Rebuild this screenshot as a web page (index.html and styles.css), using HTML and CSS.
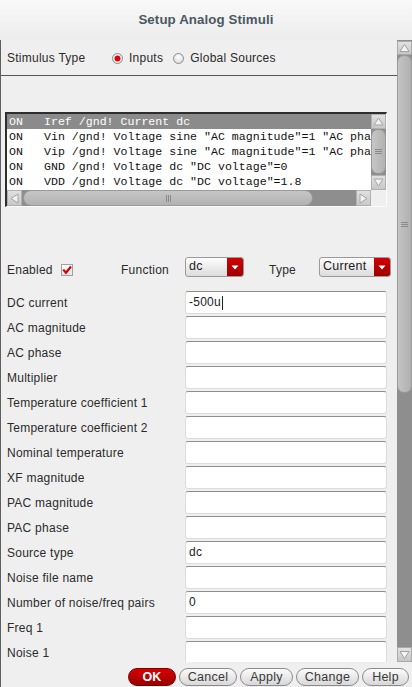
FILE: index.html
```html
<!DOCTYPE html>
<html>
<head>
<meta charset="utf-8">
<title>Setup Analog Stimuli</title>
<link rel="stylesheet" href="styles.css">
</head>
<body>
<div class="window">
  <div class="titlebar">Setup Analog Stimuli</div>
  <div class="middle">
    <div class="content">
      <div class="stim-row">
        <span class="stim-label">Stimulus Type</span>
        <span class="radio on"></span><span class="radio-text first">Inputs</span>
        <span class="radio"></span><span class="radio-text">Global Sources</span>
      </div>

      <div class="listbox">
        <div class="rows">
          <div class="row sel"><span class="c1">ON</span><span>Iref /gnd! Current dc</span></div>
          <div class="row"><span class="c1">ON</span><span>Vin /gnd! Voltage sine "AC magnitude"=1 "AC phase"=0</span></div>
          <div class="row"><span class="c1">ON</span><span>Vip /gnd! Voltage sine "AC magnitude"=1 "AC phase"=180</span></div>
          <div class="row"><span class="c1">ON</span><span>GND /gnd! Voltage dc "DC voltage"=0</span></div>
          <div class="row"><span class="c1">ON</span><span>VDD /gnd! Voltage dc "DC voltage"=1.8</span></div>
        </div>
        <div class="lvscroll">
          <div class="arrow v"><svg width="13" height="13" viewBox="0 0 13 13"><path d="M2 10 L6.5 3 L11 10 Z" fill="#f2f2f2" stroke="#a4a4a4"/></svg></div>
          <div class="lthumb-v"><svg width="7" height="7" viewBox="0 0 7 7"><path d="M0 1.5h7M0 3.5h7M0 5.5h7" stroke="#8a8a8a" stroke-width="1"/></svg></div>
          <div class="arrow v"><svg width="13" height="13" viewBox="0 0 13 13"><path d="M2 3 L6.5 10 L11 3 Z" fill="#f2f2f2" stroke="#a4a4a4"/></svg></div>
        </div>
        <div class="lhscroll">
          <div class="arrow h"><svg width="13" height="13" viewBox="0 0 13 13"><path d="M10 2 L3 6.5 L10 11 Z" fill="#f2f2f2" stroke="#a4a4a4"/></svg></div>
          <div class="lthumb-h"><svg width="7" height="7" viewBox="0 0 7 7"><path d="M1.5 0v7M3.5 0v7M5.5 0v7" stroke="#8a8a8a" stroke-width="1"/></svg></div>
          <div class="htrack"></div>
          <div class="arrow h"><svg width="13" height="13" viewBox="0 0 13 13"><path d="M3 2 L10 6.5 L3 11 Z" fill="#f2f2f2" stroke="#a4a4a4"/></svg></div>
        </div>
        <div class="corner"></div>
      </div>

      <div class="opts">
        <span class="opt-enabled">Enabled</span>
        <span class="checkbox"><svg width="10" height="10" viewBox="0 0 10 10"><path d="M1.2 4.6 L4 7.8 L9 1.5" stroke="#d40000" stroke-width="2.2" fill="none"/></svg></span>
        <span class="opt-function">Function</span>
        <span class="dd dd-func"><span class="dd-text">dc</span><span class="dd-btn"><svg width="8" height="5" viewBox="0 0 8 5"><path d="M0.5 0.5 L7.5 0.5 L4 4.5 Z" fill="#fff"/></svg></span></span>
        <span class="opt-type">Type</span>
        <span class="dd dd-type"><span class="dd-text">Current</span><span class="dd-btn"><svg width="8" height="5" viewBox="0 0 8 5"><path d="M0.5 0.5 L7.5 0.5 L4 4.5 Z" fill="#fff"/></svg></span></span>
      </div>

      <div class="fields">
        <span class="label">DC current</span><span class="field">-500u<span class="caret"></span></span>
        <span class="label">AC magnitude</span><span class="field"></span>
        <span class="label">AC phase</span><span class="field"></span>
        <span class="label">Multiplier</span><span class="field"></span>
        <span class="label">Temperature coefficient 1</span><span class="field"></span>
        <span class="label">Temperature coefficient 2</span><span class="field"></span>
        <span class="label">Nominal temperature</span><span class="field"></span>
        <span class="label">XF magnitude</span><span class="field"></span>
        <span class="label">PAC magnitude</span><span class="field"></span>
        <span class="label">PAC phase</span><span class="field"></span>
        <span class="label">Source type</span><span class="field">dc</span>
        <span class="label">Noise file name</span><span class="field"></span>
        <span class="label">Number of noise/freq pairs</span><span class="field">0</span>
        <span class="label">Freq 1</span><span class="field"></span>
        <span class="label">Noise 1</span><span class="field"></span>
      </div>
    </div>

    <div class="vscroll">
      <div class="sb-btn"><svg width="13" height="12" viewBox="0 0 13 12"><path d="M2 9.5 L6.5 2.5 L11 9.5 Z" fill="#f4f4f4" stroke="#a0a0a0"/></svg></div>
      <div class="sb-thumb"><svg width="7" height="7" viewBox="0 0 7 7"><path d="M0 1.5h7M0 3.5h7M0 5.5h7" stroke="#8a8a8a" stroke-width="1"/></svg></div>
      <div class="sb-track"></div>
      <div class="sb-btn down"><svg width="13" height="12" viewBox="0 0 13 12"><path d="M2 2.5 L6.5 9.5 L11 2.5 Z" fill="#f4f4f4" stroke="#a0a0a0"/></svg></div>
    </div>
  </div>

  <div class="footer">
    <span class="btn ok">OK</span>
    <span class="btn w-cancel">Cancel</span>
    <span class="btn w-apply">Apply</span>
    <span class="btn w-change">Change</span>
    <span class="btn w-help">Help</span>
  </div>
</div>
</body>
</html>
```

FILE: styles.css
```css
* { box-sizing: border-box; }
html, body { margin: 0; padding: 0; }
body {
  width: 412px;
  height: 687px;
  overflow: hidden;
  background: #efefef;
  font-family: "Liberation Sans", Arial, sans-serif;
  font-size: 12px;
  letter-spacing: 0.25px;
  color: #2b2b2b;
}
.window { width: 412px; height: 687px; display: flex; flex-direction: column; }

.titlebar {
  height: 40px;
  flex: none;
  display: flex;
  align-items: center;
  justify-content: center;
  background: linear-gradient(#f9f9f9, #ececec);
  font-weight: bold;
  font-size: 13.3px;
  letter-spacing: 0.1px;
  color: #4b5862;
  padding-bottom: 2px;
}

.middle { height: 622px; flex: none; display: flex; border-left: 1px solid #5f5f5f; }
.content { width: 396px; flex: none; overflow: hidden; }

/* stimulus row */
.stim-row {
  height: 36px;
  display: flex;
  align-items: center;
  padding-left: 6px;
  padding-top: 1px;
  border-bottom: 1px solid #555;
}
.stim-label { width: 105px; }
.radio {
  width: 11px; height: 11px;
  border-radius: 50%;
  border: 1px solid #8c8c8c;
  background: radial-gradient(circle at 50% 35%, #ffffff, #d2d2d2);
  flex: none;
}
.radio.on { background: radial-gradient(circle, #e00000 0 2.6px, #f6f6f6 3.4px, #d0d0d0 100%); }
.radio-text { margin-left: 6px; margin-right: 10px; }
.radio-text.first { margin-right: 10px; }

/* list box */
.listbox {
  margin: 36px 0 0 4px;
  width: 382px;
  height: 95px;
  border-top: 2px solid #2e2e2e;
  border-left: 2px solid #2e2e2e;
  border-right: 1px solid #fbfbfb;
  border-bottom: 1px solid #fbfbfb;
  background: #ffffff;
  display: grid;
  grid-template-columns: 364px 15px;
  grid-template-rows: 76px 16px;
}
.rows { background: #fff; overflow: hidden; }
.row {
  height: 15px;
  line-height: 15px;
  white-space: pre;
  overflow: hidden;
  font-family: "Liberation Mono", "DejaVu Sans Mono", monospace;
  font-size: 11.6px;
  letter-spacing: 0;
  color: #111;
  padding-left: 2px;
  display: flex;
}
.row.sel { background: #8b8b8b; color: #fff; }
.c1 { width: 35px; flex: none; }

.lvscroll { display: flex; flex-direction: column; background: #8e8e8e; }
.arrow {
  background: linear-gradient(#e0e0e0, #c8c8c8);
  border: 1px solid #b0b0b0;
  display: flex; align-items: center; justify-content: center;
  flex: none;
}
.arrow.v { height: 15px; }
.arrow.h { width: 15px; }
.lthumb-v {
  flex: 1;
  background: linear-gradient(90deg, #c6c6c6, #b2b2b2);
  border: 1px solid #999;
  border-radius: 7px;
  display: flex; align-items: center; justify-content: center;
  margin-bottom: 1px;
}
.lhscroll { display: flex; background: #8e8e8e; }
.lthumb-h {
  width: 290px;
  flex: none;
  background: linear-gradient(#c6c6c6, #b2b2b2);
  border: 1px solid #999;
  border-radius: 8px;
  display: flex; align-items: center; justify-content: center;
  margin-left: 1px;
}
.htrack { flex: 1; }
.corner { background: #efefef; }

/* options row */
.opts {
  margin-top: 50px;
  height: 20px;
  display: flex;
  align-items: center;
  padding-left: 6px;
}
.opts > span { flex: none; }
.opt-enabled { width: 54px; padding-top: 5px; }
.checkbox {
  width: 12px; height: 12px;
  margin-top: 6px;
  border: 1px solid #a0a0a0;
  background: linear-gradient(#ffffff, #e4e4e4);
  display: flex; align-items: center; justify-content: center;
}
.opt-function { width: 64px; margin-left: 48px; padding-top: 5px; }
.opt-type { width: 50px; margin-left: 25px; padding-top: 5px; }
.dd {
  height: 20px;
  border: 1px solid #9a9a9a;
  border-radius: 3px;
  background: linear-gradient(#fdfdfd, #dcdcdc);
  display: flex;
  overflow: hidden;
}
.dd-func { width: 59px; }
.dd-type { width: 72px; }
.dd-text { flex: 1; padding-left: 3px; line-height: 16px; font-size: 12.5px; color: #222; }
.dd-btn {
  width: 16px;
  background: linear-gradient(#d20000, #9c0000);
  display: flex; align-items: center; justify-content: center;
}

/* fields */
.fields {
  margin-top: 14px;
  padding-left: 6px;
  display: grid;
  grid-template-columns: 178px 202px;
  grid-auto-rows: 23px;
  row-gap: 2px;
  align-items: center;
}
.label { white-space: nowrap; color: #2b2b2b; }
.field {
  height: 23px;
  background: #fff;
  border: 1px solid #dcdcdc;
  border-top-color: #8e8e8e;
  border-radius: 3px;
  padding-left: 3px;
  line-height: 21px;
  color: #222;
  display: flex;
  align-items: center;
}
.caret { width: 1px; height: 14px; background: #222; margin-left: 1px; }

/* main scrollbar */
.vscroll {
  width: 15px;
  flex: none;
  display: flex;
  flex-direction: column;
  padding-top: 1px;
  background: #8e8e8e;
}
.sb-btn {
  height: 14px;
  flex: none;
  background: linear-gradient(#e2e2e2, #c6c6c6);
  border: 1px solid #aaa;
  display: flex; align-items: center; justify-content: center;
}
.sb-btn.down { height: 15px; }
.sb-thumb {
  height: 338px;
  flex: none;
  background: linear-gradient(90deg, #c4c4c4, #b0b0b0);
  border: 1px solid #9a9a9a;
  border-radius: 7px;
  display: flex; align-items: center; justify-content: center;
}
.sb-track { flex: 1; }

/* footer buttons */
.footer {
  height: 25px;
  flex: none;
  border-left: 1px solid #5f5f5f;
  display: flex;
  justify-content: flex-end;
  gap: 3px;
  padding: 6px 3px 0 0;
}
.btn {
  height: 18px;
  border: 1px solid #8c8c8c;
  border-radius: 9px;
  background: linear-gradient(#fbfbfb, #d8d8d8);
  display: flex; align-items: center; justify-content: center;
  color: #3a3a3a;
  font-size: 12.5px;
}
.btn.ok {
  width: 48px;
  background: linear-gradient(#d80000, #9a0000);
  border-color: #7a0000;
  color: #fff;
  font-weight: bold;
}
.w-cancel { width: 58px; }
.w-apply { width: 53px; }
.w-change { width: 63px; }
.w-help { width: 47px; }
```
